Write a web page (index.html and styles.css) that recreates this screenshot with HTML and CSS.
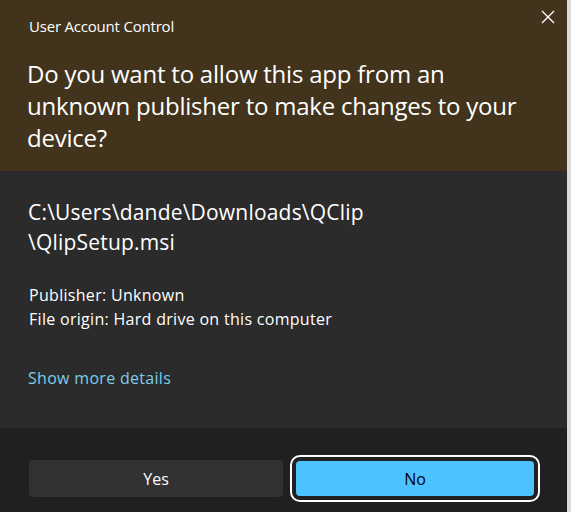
FILE: index.html
```html
<!DOCTYPE html>
<html lang="en">
<head>
  <meta charset="UTF-8">
  <title>User Account Control</title>
  <link rel="stylesheet" href="styles.css">
</head>
<body>

  <div class="dialog">
    <div class="header">
      <div class="title-row">
        <span class="title">User Account Control</span>
        <button class="close" aria-label="Close">
          <svg width="14" height="14" viewBox="0 0 14 14">
            <path d="M1 1 L13 13 M13 1 L1 13" stroke="#fff" stroke-width="1.4" fill="none"/>
          </svg>
        </button>
      </div>
      <h1 class="question">Do you want to allow this app from an<br>unknown publisher to make changes to your<br>device?</h1>
    </div>

    <div class="content">
      <p class="path">C:\Users\dande\Downloads\QClip<br>\QlipSetup.msi</p>
      <p class="meta">Publisher: Unknown<br>File origin: Hard drive on this computer</p>
      <a class="details" href="javascript:void(0)">Show more details</a>
    </div>

    <div class="footer">
      <button class="btn btn-yes">Yes</button>
      <button class="btn btn-no">No</button>
    </div>
  </div>

</body>
</html>
```

FILE: styles.css
```css
body {
  margin: 0;
  background-color: #dadada;
  font-family: "Open Sans", "Noto Sans", sans-serif;
  color: #fff;
}
.dialog {
  width: 567px;
  height: 512px;
  display: flex;
  flex-direction: column;
  background-color: #2b2b2b;
}
.header {
  background-color: #42331c;
  height: 171px;
  box-sizing: border-box;
  padding: 16px 0 0 29px;
}
.title-row {
  display: flex;
  justify-content: space-between;
  align-items: flex-start;
}
.title {
  font-size: 15px;
  line-height: 20px;
  letter-spacing: -0.2px;
}
.close {
  background: none;
  border: none;
  padding: 0;
  margin: -6px 12px 0 0;
  width: 14px;
  height: 14px;
}
.question {
  margin: 22px 0 0 -2px;
  font-size: 24px;
  font-weight: normal;
  line-height: 32px;
  letter-spacing: -0.22px;
}
.content {
  flex: 1;
  padding: 26px 29px 0 28px;
}
.path {
  margin: 0;
  font-size: 21px;
  line-height: 30px;
  letter-spacing: 0.2px;
}
.meta {
  margin: 26px 0 0 1px;
  font-size: 16px;
  line-height: 24px;
  letter-spacing: 0.3px;
}
.details {
  display: block;
  margin-top: 35px;
  font-size: 16px;
  line-height: 24px;
  letter-spacing: 0.3px;
  color: #7ccdea;
  text-decoration: none;
}
.footer {
  height: 84px;
  box-sizing: border-box;
  background-color: #202020;
  padding: 32px 26px 0 29px;
  display: grid;
  grid-template-columns: 254px 1fr;
  gap: 6px;
  align-items: start;
}
.btn {
  font-family: inherit;
  font-size: 16px;
  border: none;
  border-radius: 4px;
  height: 37px;
  padding: 0;
}
.btn-yes {
  background-color: #323232;
  color: #fff;
}
.btn-no {
  background-color: #4cc2ff;
  color: #000;
  height: 35px;
  margin: 1px 7px 0;
  outline: 2px solid #fff;
  outline-offset: 4px;
}
```
